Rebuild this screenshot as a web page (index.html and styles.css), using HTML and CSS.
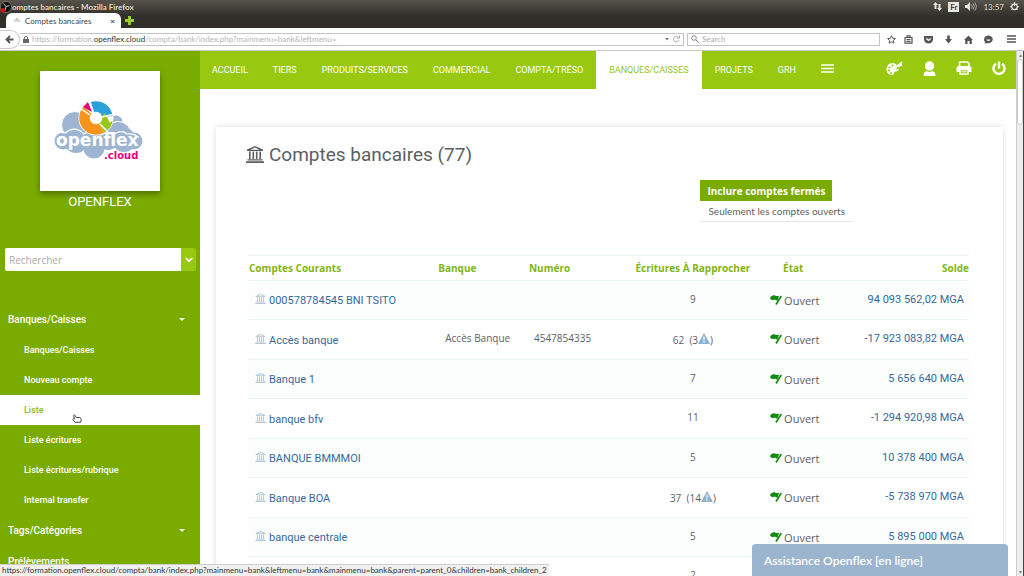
FILE: index.html
```html
<!DOCTYPE html>
<html lang="fr">
<head>
<meta charset="utf-8">
<title>Comptes bancaires</title>
<link rel="stylesheet" href="styles.css">
</head>
<body>
<svg width="0" height="0" class="defs" aria-hidden="true">
  <symbol id="bank" viewBox="0 0 18 17"><path d="M9 0 17 3.6V5H1V3.6ZM9 1.5 4.5 3.7h9Z" fill-rule="evenodd"/><path d="M3 5.500h1.600v7.600H3zM6.500 5.500h1.600v7.600H6.500zM9.900 5.500h1.600v7.600H9.900zM13.400 5.500H15v7.600h-1.600zM1.500 13.300h15v1.300h-15zM0 15.300h18V17H0z"/></symbol>
  <symbol id="flag" viewBox="0 0 12 10"><path d="M0 3C1.200.6 3.200-.2 5 .5 6.300 1.100 7.700 1.200 9.200.7L7.200 6.200C6.400 5 4.800 4.600 3.300 5 2 5.200.6 4.500 0 3Z"/><path d="M11.300 1 6 9.500" fill="none" stroke="currentColor" stroke-width="1.600"/></symbol>
  <symbol id="warn" viewBox="0 0 12 11"><path d="M6 0 12 11H0Z"/><path d="M6 3.500v4M6 8.300v1.400" stroke="#fff" stroke-width="1.200"/></symbol>
</svg>
<header class="chrome">
  <div class="titlebar">
    <svg class="app-icon" viewBox="0 0 12 12"><circle cx="6" cy="6" r="5.600" fill="#111" stroke="#999" stroke-width=".6"/><path d="M6 5.500 3.500 2.500M6 5.500l3.500-1M6 5.500 5 9.500" stroke="#bbb" stroke-width="1"/><circle cx="2.800" cy="9.300" r="2.400" fill="#e01010"/></svg>
    <span class="window-title">omptes bancaires - Mozilla Firefox</span>
    <div class="tray">
      <svg width="9" height="9" viewBox="0 0 9 9" fill="#e8e6e0"><path d="M2.500 0 5 3H3.500v4h-2V3H0zM6.500 9 4 6h1.500V2h2v4H9z"/></svg>
      <span class="lang">Fr</span>
      <svg width="12" height="9" viewBox="0 0 12 9"><path d="M0 3h2l3-3v9L2 6H0z" fill="#e8e6e0"/><path d="M6.500 2.500q1.500 2 0 4M8.200 1.500q2.200 3 0 6M10 .5q3 4 0 8" fill="none" stroke="#aaa89f"/></svg>
      <time>13:57</time>
      <svg width="9" height="9" viewBox="0 0 9 9" fill="none" stroke="#e8e6e0"><circle cx="4.500" cy="4.800" r="2.800" stroke-width="1.300"/><path d="M4.500 0v4M0 4.800h1M8 4.800h1M1.300 1.600l1 1M7.700 1.600l-1 1M1.300 8l1-1M7.700 8l-1-1"/></svg>
    </div>
  </div>
  <div class="tabs">
    <div class="tab">
      <svg width="8" height="7" viewBox="0 0 8 7"><path d="M1 5a2 2 0 0 1 1-3q2-2 3.500 0Q8 2.500 7 5Z" fill="#d5dde3"/><path d="M3 2.500q1-1.500 2.500 0" fill="none" stroke="#d9b34c"/></svg>
      <span>Comptes bancaires</span>
      <button class="tab-close" aria-label="Fermer l'onglet">×</button>
    </div>
    <button class="tab-new" aria-label="Nouvel onglet"><svg width="9" height="9" viewBox="0 0 9 9"><path d="M3 0h3v3h3v3H6v3H3V6H0V3h3z" fill="#9ccc2e"/></svg></button>
  </div>
  <div class="toolbar">
    <button class="back" aria-label="Retour"><svg width="9" height="9" viewBox="0 0 9 9"><path d="M8.500 4.500H2M5 1 1.500 4.500 5 8" fill="none" stroke="#555" stroke-width="1.800"/></svg></button>
    <div class="url">
      <svg width="6" height="7" viewBox="0 0 6 7"><path d="M0 3h6v4H0z" fill="#666"/><path d="M1.300 3.500V2a1.700 1.500 0 0 1 3.400 0v1.500" fill="none" stroke="#666"/></svg>
      <span class="url-text">https://formation.<b>openflex.cloud</b>/compta/bank/index.php?mainmenu=bank&amp;leftmenu=</span>
      <svg class="url-end" width="16" height="8" viewBox="0 0 16 8"><path d="M0 3h4L2 5.500z" fill="#777"/><path d="M13.500 2.300A2.800 2.800 0 1 0 14 5M14.500.5v2.500H12" fill="none" stroke="#aaa"/></svg>
    </div>
    <label class="find"><svg width="8" height="8" viewBox="0 0 8 8" fill="none" stroke="#888"><circle cx="3" cy="3" r="2.300"/><path d="m4.800 4.800 3 3"/></svg><input type="text" placeholder="Search" aria-label="Search"></label>
    <div class="tools">
      <button aria-label="Marquer"><svg width="9" height="9" viewBox="0 0 10 10"><path d="m5 .8 1.300 2.800 3 .4-2.200 2 .6 3L5 7.500 2.300 9l.6-3L.7 4l3-.4z" fill="none" stroke="#555" stroke-width="1.100"/></svg></button>
      <button aria-label="Bibliothèque"><svg width="9" height="9" viewBox="0 0 9 9"><path d="M3 2V.8h3V2M1 2.500h7v5.700H1zM2.500 4.500h4M2.500 6.300h4" fill="none" stroke="#555" stroke-width="1.200"/></svg></button>
      <button class="pocket" aria-label="Pocket"><svg width="9" height="9" viewBox="0 0 9 9"><path d="M0 1h9v3.500a4.500 4 0 0 1-9 0z" fill="#555"/><path d="m2.300 3.500 2.200 2 2.200-2" fill="none" stroke="#fff" stroke-width="1.200"/></svg></button>
      <button aria-label="Téléchargements"><svg width="9" height="9" viewBox="0 0 9 9"><path d="M3.200 0.500h2.600v3.500H8l-3.500 4.500L1 4h2.200z" fill="#555"/></svg></button>
      <button aria-label="Accueil"><svg width="9" height="9" viewBox="0 0 9 9"><path d="M4.500.5 9 5H7.800v4H5.500V6h-2v3H1.200V5H0z" fill="#555"/></svg></button>
      <button aria-label="Discussion"><svg width="9" height="9" viewBox="0 0 9 9"><path d="M4.500.5a4.500 3.900 0 1 1-2 7.500L.7 8.700 1 7A4 4 0 0 1 4.500.5z" fill="#555"/><path d="M2.300 4.500q2.200 3 4.400 0z" fill="#fff"/></svg></button>
      <button class="burger" aria-label="Menu"><svg width="9" height="8" viewBox="0 0 9 8"><path d="M0 1h9M0 4h9M0 7h9" stroke="#555" stroke-width="1.600"/></svg></button>
    </div>
  </div>
</header>
<div class="page">
  <aside class="sidebar">
    <div class="logo-box">
      <svg viewBox="0 0 120 120" role="img" aria-label="openflex.cloud">
        <g fill="#9db5d0" stroke="#fff" stroke-width="1"><circle cx="35" cy="54" r="13.500"/><circle cx="76" cy="51" r="7"/><circle cx="78" cy="64" r="13.500"/><circle cx="54" cy="77" r="11"/></g>
        <g fill="#9db5d0"><circle cx="23" cy="70" r="8.500"/><circle cx="36" cy="70" r="12"/><circle cx="53" cy="70" r="12"/><circle cx="68" cy="68" r="11"/><circle cx="84" cy="69" r="12"/><circle cx="94" cy="70" r="8.500"/></g>
        <path d="M15 65q3-5 10-3 10-8 19 1 10-7 17 1 6-4 12 0 8-6 14-1 8-1 12 4" fill="none" stroke="#fff" stroke-width="1.200"/>
        <circle cx="56" cy="47" r="17.500" fill="#fff"/>
        <g fill="none" stroke-width="10.500"><circle cx="56" cy="47" r="11.500" stroke="#f7941d" pathLength="100" stroke-dasharray="45 55" stroke-dashoffset="-17"/><circle cx="56" cy="47" r="11.500" stroke="#2aa0dc" pathLength="100" stroke-dasharray="28 72" stroke-dashoffset="-70"/><circle cx="56" cy="47" r="11.500" stroke="#98c618" pathLength="100" stroke-dasharray="17 83"/></g>
        <path d="M62 46 75 43M60 53l8 8M53 41l-4-12M50 44l-12-8" stroke="#fff" stroke-width="1.500"/>
        <path d="m43 36 5-5 4 10z" fill="#e5007e"/>
        <text class="logo-name" x="16" y="75">openflex</text>
        <text class="logo-suffix" x="64" y="88">.cloud</text>
      </svg>
    </div>
    <p class="company">OPENFLEX</p>
    <form class="search"><input type="text" placeholder="Rechercher" aria-label="Rechercher"><button type="button" aria-label="Options"><svg width="8" height="6" viewBox="0 0 8 6"><path d="m.8 1 3.200 3.200L7.200 1" fill="none" stroke="#fff" stroke-width="1.700"/></svg></button></form>
    <nav class="side-menu">
      <a class="group" href="#">Banques/Caisses <i class="caret"></i></a>
      <a href="#">Banques/Caisses</a>
      <a href="#">Nouveau compte</a>
      <a class="current" href="#">Liste</a>
      <a href="#">Liste écritures</a>
      <a href="#">Liste écritures/rubrique</a>
      <a href="#">Internal transfer</a>
      <a class="group" href="#">Tags/Catégories <i class="caret"></i></a>
      <a class="group" href="#">Prélèvements</a>
    </nav>
  </aside>
  <main class="main">
    <nav class="top-nav">
      <a href="#">ACCUEIL</a><a href="#">TIERS</a><a href="#">PRODUITS/SERVICES</a><a href="#">COMMERCIAL</a><a href="#">COMPTA/TRÉSO</a><a class="active" href="#">BANQUES/CAISSES</a><a href="#">PROJETS</a><a href="#">GRH</a>
      <button class="more" aria-label="Plus"><svg width="13" height="9" viewBox="0 0 13 9"><path d="M0 1h13M0 4.500h13M0 8h13" stroke="#fff" stroke-width="1.300"/></svg></button>
      <div class="actions">
        <button aria-label="Thème"><svg width="17" height="15" viewBox="0 0 17 15"><path d="M7 2C2 2 .5 5.500.5 8.500S3 14 6 14c2 0 1.500-2 2.500-3s4 0 4.500-3l-4 .5 1.500-5Q9 2 7 2z" fill="#fff"/><path d="m9 8 3-4M12 5 16 1M12.500 5.500 16 3.500" stroke="#fff" stroke-width="1.800"/><g fill="#98c810"><circle cx="3.500" cy="6.500" r="1.100"/><circle cx="3" cy="9.500" r="1.100"/><circle cx="6.500" cy="4.500" r="1.100"/><circle cx="5" cy="12" r="1"/></g></svg></button>
        <button aria-label="Utilisateur"><svg width="13" height="15" viewBox="0 0 13 15" fill="#fff"><circle cx="6.500" cy="5" r="4.700"/><path d="M.5 15Q.5 10.300 4 10.300q2.500 1.300 5 0 3.500 0 3.500 4.700z"/></svg></button>
        <button aria-label="Imprimer"><svg width="16" height="14" viewBox="0 0 16 14"><path d="M3.500 5V1h8l1.500 1.500V5" fill="none" stroke="#fff" stroke-width="1.600"/><path d="M2 5h12l1.500 1.500V11H.5V6.500z" fill="#fff"/><path d="M4 8.500h8V13H4z" fill="#98c810" stroke="#fff" stroke-width="1.400"/><path d="M5.500 10.800h5" stroke="#fff"/></svg></button>
        <button aria-label="Déconnexion"><svg width="14" height="15" viewBox="0 0 14 15" fill="none" stroke="#fff" stroke-width="2.400"><path d="M4 2.800a5.500 5.500 0 1 0 6 0M7 .5v7"/></svg></button>
      </div>
    </nav>
    <section class="card">
      <h1><svg width="18" height="17"><use href="#bank"/></svg>Comptes bancaires (77)</h1>
      <div class="filters"><button class="primary">Inclure comptes fermés</button><button class="plain">Seulement les comptes ouverts</button></div>
      <table>
        <colgroup><col class="c-name"><col class="c-bank"><col class="c-num"><col class="c-rec"><col class="c-state"><col></colgroup>
        <thead><tr><th>Comptes Courants</th><th class="bank">Banque</th><th class="num">Numéro</th><th class="mid">Écritures À Rapprocher</th><th class="state">État</th><th class="end">Solde</th></tr></thead>
        <tbody>
          <tr><td class="name"><svg><use href="#bank"/></svg><a href="#">000578784545 BNI TSITO</a></td><td></td><td></td><td class="mid">9</td><td class="open"><svg><use href="#flag"/></svg>Ouvert</td><td class="end"><a href="#">94 093 562,02 MGA</a></td></tr>
          <tr><td class="name"><svg><use href="#bank"/></svg><a href="#">Accès banque</a></td><td class="bank">Accès Banque</td><td class="num">4547854335</td><td class="mid late">62 &nbsp;(3<svg><use href="#warn"/></svg>)</td><td class="open"><svg><use href="#flag"/></svg>Ouvert</td><td class="end"><a href="#">-17 923 083,82 MGA</a></td></tr>
          <tr><td class="name"><svg><use href="#bank"/></svg><a href="#">Banque 1</a></td><td></td><td></td><td class="mid">7</td><td class="open"><svg><use href="#flag"/></svg>Ouvert</td><td class="end"><a href="#">5 656 640 MGA</a></td></tr>
          <tr><td class="name"><svg><use href="#bank"/></svg><a href="#">banque bfv</a></td><td></td><td></td><td class="mid">11</td><td class="open"><svg><use href="#flag"/></svg>Ouvert</td><td class="end"><a href="#">-1 294 920,98 MGA</a></td></tr>
          <tr><td class="name"><svg><use href="#bank"/></svg><a href="#">BANQUE BMMMOI</a></td><td></td><td></td><td class="mid">5</td><td class="open"><svg><use href="#flag"/></svg>Ouvert</td><td class="end"><a href="#">10 378 400 MGA</a></td></tr>
          <tr><td class="name"><svg><use href="#bank"/></svg><a href="#">Banque BOA</a></td><td></td><td></td><td class="mid late">37 &nbsp;(14<svg><use href="#warn"/></svg>)</td><td class="open"><svg><use href="#flag"/></svg>Ouvert</td><td class="end"><a href="#">-5 738 970 MGA</a></td></tr>
          <tr><td class="name"><svg><use href="#bank"/></svg><a href="#">banque centrale</a></td><td></td><td></td><td class="mid">5</td><td class="open"><svg><use href="#flag"/></svg>Ouvert</td><td class="end"><a href="#">5 895 000 MGA</a></td></tr>
          <tr><td></td><td></td><td></td><td class="mid">2</td><td></td><td></td></tr>
        </tbody>
      </table>
    </section>
  </main>
  <div class="scrollbar"><span class="arrow">▴</span><span class="thumb"></span><span class="arrow">▾</span></div>
</div>
<button class="chat">Assistance Openflex [en ligne]</button>
<div class="status">https://formation.openflex.cloud/compta/bank/index.php?mainmenu=bank&amp;leftmenu=bank&amp;mainmenu=bank&amp;parent=parent_0&amp;children=bank_children_2</div>
<svg class="pointer" viewBox="0 0 10 9"><path d="M1.500 1.500Q2.500.5 3.300 1.600L4.200 3.500H7.500Q9.300 3.700 9.200 5.500L8.700 8.300H3.200L.8 5.500Q1 4.200 2.500 4.800z" fill="#fff" stroke="#333" stroke-width=".9"/></svg>
</body>
</html>
```
FILE: styles.css
```css
* { box-sizing: border-box; }
body { margin: 0; height: 100vh; display: flex; flex-direction: column; overflow: hidden; position: relative; background: #fff; font-family: Roboto, sans-serif; font-size: 11px; color: #5b5f63; }
button { border: 0; padding: 0; background: none; font: inherit; color: inherit; display: flex; align-items: center; }
input { border: 0; padding: 0; background: none; font: inherit; min-width: 0; outline: 0; }
a { text-decoration: none; color: inherit; }
svg { flex: none; }
.defs { position: absolute; }

.chrome { flex: none; background: linear-gradient(#56544a, #302f29 16px); font-family: Lato, sans-serif; font-size: 8px; }
.titlebar { display: flex; align-items: center; height: 13px; padding-right: 5px; color: #dfdbd2; }
.app-icon { width: 12px; height: 12px; }
.window-title { font-weight: 700; }
.tray { margin-left: auto; display: flex; align-items: center; gap: 6px; }
.lang { background: #e8e6e0; color: #3c3b37; line-height: 10px; padding: 0 2px; font-weight: 700; }
.tabs { display: flex; align-items: center; height: 15px; padding-left: 6px; gap: 4px; }
.tab { display: flex; align-items: center; gap: 4px; width: 115px; height: 15px; padding: 0 6px 0 7px; background: #fff; border-radius: 6px 6px 0 0; color: #444; }
.tab-close { margin-left: auto; font-weight: 700; }
.toolbar { display: flex; align-items: center; height: 23px; background: #fff; border-bottom: 1px solid #c8c8c8; padding-right: 8px; }
.back { width: 20px; height: 19px; justify-content: center; border: 1px solid #ccc; border-left: 0; border-radius: 0 10px 10px 0; }
.url { flex: 1; display: flex; align-items: center; gap: 3px; height: 13px; border: 1px solid #c4c4c4; border-left: 0; padding: 0 2px 0 3px; color: #b5b5b5; }
.url b { font-weight: 400; color: #333; }
.url-end { margin-left: auto; }
.find { display: flex; align-items: center; gap: 3px; width: 193px; height: 13px; margin-left: 3px; padding: 0 3px; border: 1px solid #c4c4c4; }
.find input { flex: 1; }
.find input::placeholder { color: #aaa; }
.tools { display: flex; align-items: center; gap: 11px; margin-left: 7px; }
.tools button + button { margin-left: -3px; }
.tools .pocket, .tools .pocket ~ button { margin-left: 0; }
.tools .pocket ~ .burger { margin-left: 3px; }

.page { flex: 1; min-height: 0; display: flex; }
.sidebar { flex: none; width: 200px; background: #7aab00; color: #fff; overflow: hidden; }
.logo-box { width: 120px; height: 120px; margin: 20px auto 0; background: #fff; box-shadow: 0 3px 6px rgba(0,0,0,.35); }
.logo-box svg { display: block; }
.logo-name { font: 700 17px "DejaVu Sans", sans-serif; fill: #fff; }
.logo-suffix { font: 700 10px "DejaVu Sans", sans-serif; fill: #e5007e; }
.company { margin: 3px 0 38px; text-align: center; font-size: 13px; line-height: 16px; }
.search { display: flex; height: 23px; margin: 0 4px 33px 5px; border-radius: 2px; overflow: hidden; background: #98c810; }
.search input { flex: 1; background: #fff; padding-left: 4px; font: 10px "Open Sans", sans-serif; }
.search input::placeholder { color: #aaa; }
.search button { width: 15px; justify-content: center; }
.side-menu { display: flex; flex-direction: column; font-size: 9px; font-weight: 500; }
.side-menu a { display: flex; align-items: center; height: 30px; padding-left: 24px; }
.side-menu .group { height: 31px; padding: 0 15px 0 8px; justify-content: space-between; font-size: 10px; }
.side-menu .current { background: #fff; color: #8cba20; }
.caret { border: 3px solid transparent; border-top-color: #fff; border-bottom: 0; }

.main { flex: 1; min-width: 0; display: flex; flex-direction: column; overflow: hidden; }
.top-nav { flex: none; display: flex; gap: 1px; height: 38px; background: #98c810; color: #fff; font-size: 9px; }
.top-nav a { display: flex; align-items: center; padding: 0 12px; }
.top-nav .active { padding: 0 13px; background: #fff; color: #98c810; }
.more { margin-left: 12px; padding-bottom: 4px; }
.actions { margin-left: auto; display: flex; gap: 20px; padding: 0 10px 4px 0; }
.card { flex: none; margin: 38px 13px 0 16px; padding: 14px 34px 0 32px; background: #fff; box-shadow: 0 0 5px rgba(0,0,0,.15); }
h1 { display: flex; align-items: center; gap: 5px; margin: 0 0 12px -2px; font-size: 19px; font-weight: 400; line-height: 27px; fill: currentColor; }
.filters { display: flex; flex-direction: column; align-items: flex-start; margin: 0 116px 33px auto; width: fit-content; font-size: 10px; }
.filters .primary { height: 21px; padding: 0 7px; background: #7aab00; color: #fff; font-family: "Open Sans", sans-serif; font-weight: 700; }
.filters .plain { height: 21px; padding: 0 8px; border-bottom: 1px solid #e8e8e8; font-family: Lato, sans-serif; }
table { width: 100%; border-collapse: collapse; table-layout: fixed; font-family: "Open Sans", sans-serif; font-size: 10px; }
.c-name { width: 25%; }
.c-bank { width: 13%; }
.c-num { width: 13%; }
.c-rec { width: 21%; }
.c-state { width: 11%; }
tr { border-top: 1px solid #edf6f7; }
th { height: 25px; padding: 0 0 1px 1px; text-align: left; color: #84b512; font-weight: 700; white-space: nowrap; }
th.bank { padding-left: 10px; }
th.num { padding-left: 7px; }
th.mid, td.mid { text-align: center; padding-left: 3px; padding-right: 0; }
th.state { padding-left: 16px; }
th.end { text-align: right; padding-right: 0; }
td { height: 39px; padding: 0 0 3px; white-space: nowrap; }
td.bank { padding-left: 17px; }
td.num { padding-left: 12px; }
tbody tr:nth-child(even) td { height: 40px; }
tbody tr:nth-child(odd) { background: #fcfefe; }
td a { color: #36699a; font-family: Roboto, sans-serif; font-size: 11px; }
td.name { padding: 0 0 0 7px; }
.name svg { width: 11px; height: 10px; margin-right: 3px; fill: #b0c7dc; }
td.late, td.open { padding-bottom: 0; }
.late svg { width: 12px; height: 11px; fill: #8fb0cf; }
td.open { padding-left: 3px; font-size: 11px; }
.open svg { width: 12px; height: 10px; margin-right: 2px; fill: #118a11; color: #118a11; }
td.end { text-align: right; padding-right: 5px; }

.scrollbar { flex: none; width: 8px; display: flex; flex-direction: column; align-items: center; justify-content: space-between; background: #efeeec; border-left: 1px solid #ccc; border-right: 1px solid #444; font-size: 6px; line-height: 8px; color: #888; }
.thumb { flex: none; width: 6px; height: 66px; margin-bottom: auto; background: #fff; border: 1px solid #ccc; border-radius: 3px; }
.chat { position: absolute; right: 16px; bottom: 0; width: 256px; height: 32px; padding-left: 12px; background: #9bb5cf; border-radius: 4px 4px 0 0; color: #fff; font: 600 12px Lato, sans-serif; }
.status { position: absolute; left: 0; bottom: 0; height: 12px; padding: 0 2px; background: #f2f1f0; border-top: 1px solid #ccc; font: 8px/11px Lato, sans-serif; color: #333; }
.pointer { position: absolute; left: 72px; top: 414px; width: 10px; height: 9px; }
```
